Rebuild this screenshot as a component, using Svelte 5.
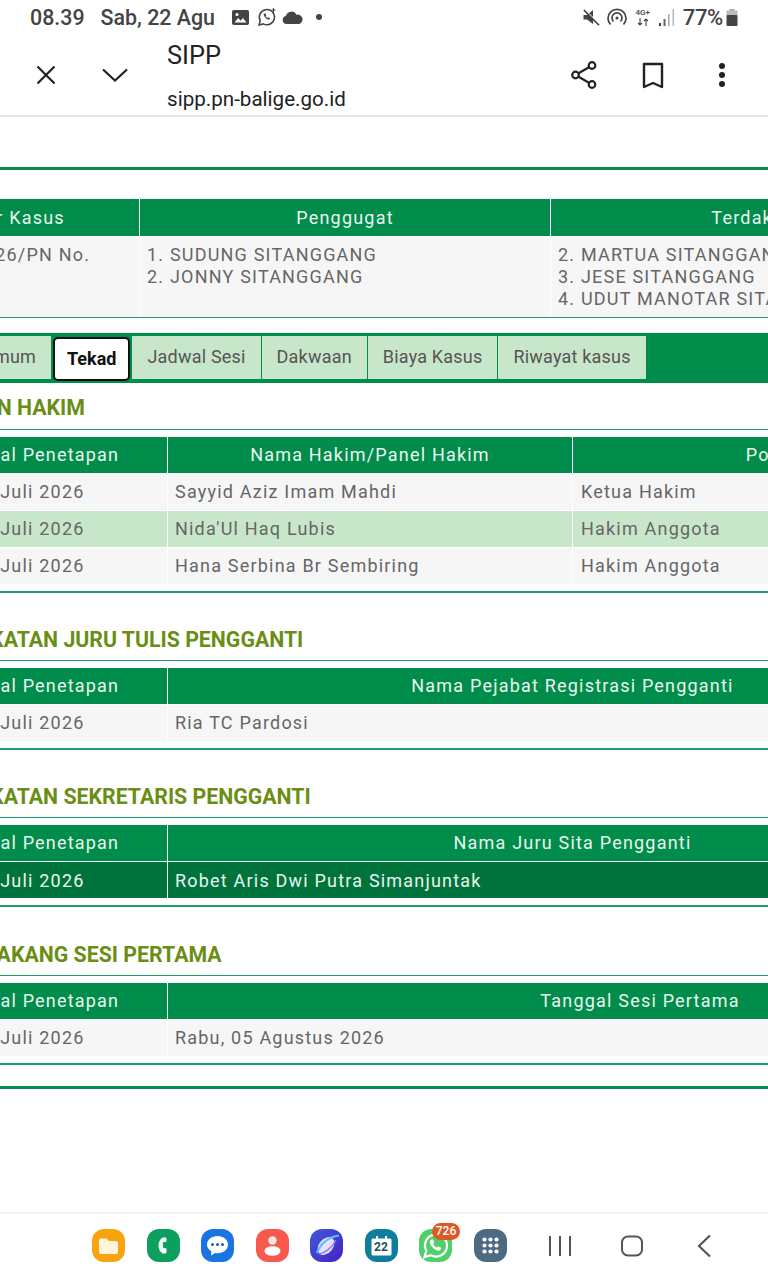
<script>
	const tabs = ['Umum', 'Tekad', 'Jadwal Sesi', 'Dakwaan', 'Biaya Kasus', 'Riwayat kasus'];

	const sections = [
		{
			title: 'PENETAPAN HAKIM',
			cls: 'hakim',
			head: ['Tanggal Penetapan', 'Nama Hakim/Panel Hakim', 'Posisi Hakim'],
			rows: [
				{ cells: ['Senin, 20 Juli 2026', 'Sayyid Aziz Imam Mahdi', 'Ketua Hakim'] },
				{ cells: ['Senin, 20 Juli 2026', "Nida'Ul Haq Lubis", 'Hakim Anggota'], tone: 'light' },
				{ cells: ['Senin, 20 Juli 2026', 'Hana Serbina Br Sembiring', 'Hakim Anggota'] }
			]
		},
		{
			title: 'PENGANGKATAN JURU TULIS PENGGANTI',
			cls: 'pejabat',
			head: ['Tanggal Penetapan', 'Nama Pejabat Registrasi Pengganti'],
			rows: [{ cells: ['Senin, 20 Juli 2026', 'Ria TC Pardosi'] }]
		},
		{
			title: 'PENGANGKATAN SEKRETARIS PENGGANTI',
			cls: 'pejabat',
			head: ['Tanggal Penetapan', 'Nama Juru Sita Pengganti'],
			rows: [{ cells: ['Senin, 20 Juli 2026', 'Robet Aris Dwi Putra Simanjuntak'], tone: 'dark' }]
		},
		{
			title: 'PIHAK BELAKANG SESI PERTAMA',
			cls: 'sesi',
			head: ['Tanggal Penetapan', 'Tanggal Sesi Pertama'],
			rows: [{ cells: ['Senin, 20 Juli 2026', 'Rabu, 05 Agustus 2026'] }]
		}
	];
</script>

<div class="screen">
	<header class="status">
		<div class="status-left">
			<span class="time">08.39</span>
			<span class="date">Sab, 22 Agu</span>
			<svg class="gallery" width="17" height="15" viewBox="0 0 17 15">
				<rect width="17" height="15" rx="2" fill="#444" />
				<path d="M2.5 12.5l3.6-4.6 2.6 2.8 2.2-2.6 3.6 4.4z" fill="#fff" />
				<circle cx="5" cy="4.4" r="1.5" fill="#fff" />
			</svg>
			<svg class="wa" width="20" height="20" viewBox="0 0 20 20" fill="none" stroke="#444" stroke-width="1.5">
				<path d="M2 18l1.2-4.2A7.6 7.6 0 1 1 6.300 16.900z" />
				<path d="M6.500 7c.6 3 2.500 4.900 5.500 5.700l1.200-1.500-2-1-.8.7c-.8-.4-1.400-1-1.800-1.800l.7-.8-1-2z" fill="#444" stroke="none" />
				<path d="M16.500 1v4M14.500 3h4" stroke-width="1.100" />
			</svg>
			<svg class="cloud" width="21" height="13" viewBox="0 0 21 13"><path d="M4.500 13a4 4 0 0 1-.6-7.900 5.600 5.600 0 0 1 10.500-1.400 4.800 4.800 0 0 1 2.600 9.300z" fill="#444" /></svg>
			<span class="dot"></span>
		</div>
		<div class="status-right">
			<svg class="mute" width="17" height="17" viewBox="0 0 17 17">
				<path d="M0.500 6h3.500l6-5v14l-6-4.500H0.500z" fill="#444" />
				<path d="M1 1l15 15" stroke="#444" stroke-width="1.800" />
				<path d="M2.500 1l14 14" stroke="#fff" stroke-width="1" />
			</svg>
			<svg class="hotspot" width="20" height="18" viewBox="0 0 20 18" fill="none" stroke="#444" stroke-width="1.700">
				<path d="M3.500 16.500a9 9 0 1 1 13 0" />
				<path d="M6.500 13.500a5 5 0 1 1 7 0" />
				<circle cx="10" cy="10" r="1.500" fill="#444" stroke="none" />
			</svg>
			<span class="net">
				<span class="net-type">4G+</span>
				<svg width="12" height="8" viewBox="0 0 12 8" fill="none" stroke="#444" stroke-width="1.100">
					<path d="M3 0v7M1 5l2 2 2-2M9 8V1M7 3l2-2 2 2" />
				</svg>
			</span>
			<svg class="signal" width="16" height="17" viewBox="0 0 16 17">
				<rect x="0" y="14" width="2" height="3" fill="#444" />
				<rect x="4.500" y="10" width="2" height="7" fill="#666" />
				<rect x="9" y="5" width="1.600" height="12" fill="#aaa" />
				<rect x="13.500" y="0" width="1.600" height="17" fill="#bbb" />
			</svg>
			<span class="pct">77%</span>
			<svg class="battery" width="12" height="17" viewBox="0 0 12 17">
				<rect x="3.500" y="0" width="5" height="2" fill="#aaa" />
				<rect x="0.500" y="1.500" width="11" height="5" fill="#bbb" />
				<rect x="0.500" y="6" width="11" height="11" rx="1" fill="#444" />
			</svg>
		</div>
	</header>

	<nav class="toolbar">
		<div class="tb-btn">
			<svg width="24" height="24" viewBox="0 0 24 24" fill="none" stroke="#222" stroke-width="2.200"><path d="M3.500 3.500l17 17M20.500 3.500l-17 17" /></svg>
		</div>
		<div class="tb-btn">
			<svg width="28" height="16" viewBox="0 0 28 16" fill="none" stroke="#222" stroke-width="2.200"><path d="M2 2.500l12 11 12-11" /></svg>
		</div>
		<div class="title">
			<span class="site">SIPP</span>
			<span class="url">sipp.pn-balige.go.id</span>
		</div>
		<div class="tb-right">
			<div class="tb-btn">
				<svg width="28" height="30" viewBox="0 0 28 30" fill="none" stroke="#222" stroke-width="2.200">
					<circle cx="22" cy="5.500" r="3.300" />
					<circle cx="5.500" cy="15" r="3.300" />
					<circle cx="22" cy="24.500" r="3.300" />
					<path d="M8.500 13.300L19 7.300M8.500 16.700L19 22.700" />
				</svg>
			</div>
			<div class="tb-btn">
				<svg width="22" height="27" viewBox="0 0 22 27" fill="none" stroke="#222" stroke-width="2.400"><path d="M2 2h18v23l-9-4-9 4z" stroke-linejoin="round" /></svg>
			</div>
			<div class="tb-btn">
				<svg width="8" height="26" viewBox="0 0 8 26" fill="#222"><circle cx="4" cy="4" r="3" /><circle cx="4" cy="13" r="3" /><circle cx="4" cy="22" r="3" /></svg>
			</div>
		</div>
	</nav>

	<main class="content">
		<div class="sheet">
			<hr class="thick" />

			<div class="table case">
				<div class="th">Nomor Kasus</div>
				<div class="th">Penggugat</div>
				<div class="th">Terdakwa</div>
				<div class="td">2/Pid.Sus/2026/PN No.</div>
				<div class="td">1. SUDUNG SITANGGANG<br />2. JONNY SITANGGANG</div>
				<div class="td">2. MARTUA SITANGGANG<br />3. JESE SITANGGANG<br />4. UDUT MANOTAR SITANGGANG</div>
			</div>
			<hr class="thin" />

			<div class="tabs">
				{#each tabs as tab}
					<span class="tab" class:active={tab === 'Tekad'} class:first={tab === 'Umum'}>{tab}</span>
				{/each}
			</div>

			{#each sections as section}
				<section class="block">
					<h3>{section.title}</h3>
					<hr class="thin head-line" />
					<div class="table {section.cls}">
						{#each section.head as h}
							<div class="th">{h}</div>
						{/each}
						{#each section.rows as row}
							{#each row.cells as cell, i}
								<div class="td {row.tone ?? ''}" class:date={i === 0}>{cell}</div>
							{/each}
						{/each}
					</div>
					<hr class="thin foot-line" />
				</section>
			{/each}

			<hr class="thick last" />
		</div>
	</main>

	<footer class="dock">
		<div class="apps">
			<span class="app folder">
				<svg width="33" height="33" viewBox="0 0 33 33"><path d="M7 11.500a2 2 0 0 1 2-2h5.500l2.500 2.500h7a2 2 0 0 1 2 2v9a2 2 0 0 1-2 2H9a2 2 0 0 1-2-2z" fill="#fff4dc" /></svg>
			</span>
			<span class="app phone">
				<svg width="33" height="33" viewBox="0 0 33 33"><path d="M18 8.500h-2.500c-3 2-4 5-4 8s1 6 4 8H18c1 0 1.500-.6 1.500-1.500v-2.500c0-1-.6-1.500-1.500-1.500h-1.500c-.8-1.500-1-5.500 0-6H18c1 0 1.500-.6 1.500-1.500V10c0-1-.6-1.500-1.500-1.500z" fill="#f2fbf6" /></svg>
			</span>
			<span class="app msg">
				<svg width="33" height="33" viewBox="0 0 33 33">
					<path d="M16.500 7c6 0 10.500 3.700 10.500 8.600s-4.500 8.600-10.500 8.600c-.8 0-1.500 0-2.200-.2L10 26.500l.4-4.300C7.500 20.600 6 18.300 6 15.600 6 10.700 10.500 7 16.500 7z" fill="#fff" />
					<circle cx="11.500" cy="15.500" r="1.500" fill="#1c5fb0" /><circle cx="16.500" cy="15.500" r="1.500" fill="#1c5fb0" /><circle cx="21.500" cy="15.500" r="1.500" fill="#1c5fb0" />
				</svg>
			</span>
			<span class="app contact">
				<svg width="33" height="33" viewBox="0 0 33 33"><circle cx="16.500" cy="11.500" r="4.200" fill="#fde7e2" /><ellipse cx="16.500" cy="22" rx="8" ry="4.800" fill="#fff" /></svg>
			</span>
			<span class="app browser">
				<svg width="33" height="33" viewBox="0 0 33 33" fill="none">
					<ellipse cx="16" cy="17" rx="7" ry="10" transform="rotate(40 16 17)" fill="#e6e0ff" />
					<path d="M7 24C11 14 19 8 29 6.500" stroke="#5cc0f2" stroke-width="2.200" />
					<path d="M9 25c6-1 13-6 17-14" stroke="#8f7bf0" stroke-width="1.500" />
				</svg>
			</span>
			<span class="app calendar">
				<svg width="33" height="33" viewBox="0 0 33 33"><path d="M8 9.500h17a1.500 1.500 0 0 1 1.500 1.500v14a1.500 1.500 0 0 1-1.500 1.500H8A1.500 1.500 0 0 1 6.500 25V11A1.500 1.500 0 0 1 8 9.500z" fill="#fff" /><rect x="11" y="7" width="2" height="4" fill="#fff" /><rect x="20" y="7" width="2" height="4" fill="#fff" /></svg>
				<span class="cal-day">22</span>
			</span>
			<span class="app whatsapp">
				<svg width="33" height="33" viewBox="0 0 33 33">
					<path d="M5.500 28l1.800-6.300a11 11 0 1 1 4.300 4.400z" fill="none" stroke="#fff" stroke-width="2.200" />
					<path d="M12 10.500c-2 2-1 5 1.500 7.800s5.600 4.200 7.700 2.800c1-.7 1.200-1.600 1-2.400l-3-1.500-1.300 1.300c-1.500-.5-3-2-3.800-3.700l1.200-1.300-1.300-3.100c-.8-.2-1.400 0-2 .6z" fill="#fff" />
				</svg>
				<span class="badge">726</span>
			</span>
			<span class="app grid">
				<svg width="33" height="33" viewBox="0 0 33 33" fill="#fff">
					{#each [10.500, 16.500, 22.500] as y}
						{#each [10.500, 16.500, 22.500] as x}
							<circle cx={x} cy={y} r="2.100" />
						{/each}
					{/each}
				</svg>
			</span>
		</div>
		<div class="softkeys">
			<svg width="24" height="20" viewBox="0 0 24 20" fill="#555"><rect x="1" y="0" width="2" height="20" /><rect x="11" y="0" width="2" height="20" /><rect x="21" y="0" width="2" height="20" /></svg>
			<svg width="24" height="22" viewBox="0 0 24 22" fill="none" stroke="#555" stroke-width="2"><rect x="2" y="1.500" width="20" height="19" rx="6" /></svg>
			<svg width="16" height="24" viewBox="0 0 16 24" fill="none" stroke="#555" stroke-width="2.200"><path d="M14 1.500L3 12l11 10.500" /></svg>
		</div>
	</footer>
</div>

<style>
	:global(body) {
		background: #fff;
	}

	.screen {
		width: 768px;
		height: 1280px;
		display: flex;
		flex-direction: column;
		overflow: hidden;
		background: #fff;
		font-family: Roboto, 'Liberation Sans', sans-serif;
	}

	/* status bar */
	.status {
		height: 34px;
		display: flex;
		align-items: center;
		justify-content: space-between;
		padding: 0 30px;
		color: #444;
		font-weight: 500;
		font-size: 21.400px;
	}

	.status-left,
	.status-right {
		display: flex;
		align-items: center;
	}

	.date {
		margin-left: 16px;
	}

	.gallery {
		margin-left: 17px;
	}

	.wa {
		margin-left: 8px;
	}

	.cloud {
		margin-left: 5px;
	}

	.dot {
		width: 6px;
		height: 6px;
		border-radius: 50%;
		background: #444;
		margin-left: 13px;
	}

	.hotspot {
		margin-left: 7px;
	}

	.net {
		display: flex;
		flex-direction: column;
		align-items: center;
		width: 18px;
		margin-left: 7px;
		line-height: 1;
	}

	.net-type {
		font-size: 8px;
		height: 9px;
	}

	.signal {
		margin-left: 7px;
	}

	.pct {
		margin-left: 8px;
		font-size: 22px;
		letter-spacing: -0.3px;
	}

	.battery {
		margin-left: 3px;
	}

	/* browser toolbar */
	.toolbar {
		position: relative;
		height: 83px;
		flex: none;
		display: flex;
		align-items: center;
		padding: 1px 0 0 11px;
		border-bottom: 2px solid #e8e8e8;
		box-sizing: border-box;
		color: #222;
	}

	.tb-btn {
		width: 69px;
		height: 40px;
		display: flex;
		align-items: center;
		justify-content: center;
	}

	.title {
		display: flex;
		flex-direction: column;
		align-self: flex-start;
		margin-left: 18px;
		padding-top: 5px;
	}

	.site {
		font-size: 25.400px;
		line-height: 30px;
	}

	.url {
		font-size: 20.600px;
		line-height: 24px;
		margin-top: 17px;
	}

	.tb-right {
		display: flex;
		margin-left: auto;
		margin-right: 12px;
	}

	/* page content, scrolled sideways so the left part is cut off */
	.content {
		flex: 1;
		overflow: hidden;
	}

	.sheet {
		width: 1260px;
		margin-left: -132px;
		padding-top: 50px;
	}

	hr {
		margin: 0;
		border: 0;
	}

	.thick {
		height: 3px;
		background: #0a8a4e;
	}

	.thin {
		height: 1px;
		background: #1f9e66;
	}

	.last {
		margin-top: 21px;
	}

	.table {
		display: grid;
		column-gap: 1px;
		margin-left: 29px;
		letter-spacing: 1.200px;
		font-size: 18px;
	}

	.table.case {
		margin-left: 0;
		margin-top: 29px;
		grid-template-columns: 271px 410px 408px;
	}

	.hakim {
		grid-template-columns: 270px 404px 465px;
	}

	.pejabat {
		grid-template-columns: 270px 809px;
	}

	.sesi {
		grid-template-columns: 270px 944px;
	}

	.th {
		background: #008c4a;
		color: #eaf6ef;
		text-align: center;
		height: 36px;
		line-height: 36px;
		margin-bottom: 1px;
	}

	.case .th {
		height: 37px;
		line-height: 37px;
	}

	.td {
		background: #f6f6f6;
		color: #666;
		height: 36px;
		line-height: 35px;
		padding-left: 7px;
		margin-bottom: 1px;
		white-space: nowrap;
		overflow: hidden;
	}

	.td.date {
		padding-left: 0;
		text-indent: -2px;
	}

	.hakim .td:nth-child(3n) {
		padding-left: 8px;
	}

	.td.light {
		background: #c8e6c9;
	}

	.td.dark {
		background: #00733c;
		color: #e8f5ee;
		line-height: 37px;
	}

	.case .td {
		height: 80px;
		line-height: 22px;
		padding: 7px 0 0 7px;
		box-sizing: border-box;
		margin-bottom: 0;
	}

	/* tabs */
	.tabs {
		margin-top: 15px;
		height: 50px;
		box-sizing: border-box;
		background: #008c4a;
		padding: 3px 0 3px 4px;
		display: flex;
		font-size: 18px;
		letter-spacing: 0.200px;
		column-gap: 1px;
	}

	.tab {
		height: 43px;
		line-height: 42px;
		padding: 0 15px;
		background: #c8e6c9;
		color: #555;
	}

	.tab.first {
		width: 179px;
		padding: 0 15px 0 0;
		box-sizing: border-box;
		text-align: right;
	}

	.tab.active {
		position: relative;
		height: 44px;
		line-height: 39px;
		margin: 1px 1px -2px 1px;
		padding: 0 12px;
		box-sizing: border-box;
		background: #fff;
		border: 2px solid #111;
		border-radius: 5px;
		color: #111;
		font-weight: 700;
		letter-spacing: 0;
	}

	/* section blocks */
	.block h3 {
		margin: 0;
		padding-left: 23px;
		height: 46px;
		line-height: 50px;
		font-size: 21.300px;
		font-weight: 700;
		color: #6a8e14;
		white-space: nowrap;
		text-align: left;
	}

	.head-line {
		margin-bottom: 7px;
	}

	.foot-line {
		margin-top: 6px;
		height: 2px;
	}

	.block + .block h3 {
		margin-top: 21px;
		line-height: 52px;
	}

	.block:last-of-type h3 {
		margin-top: 22px;
	}

	/* bottom dock */
	.dock {
		height: 68px;
		flex: none;
		border-top: 2px solid #f4f4f4;
		display: flex;
		align-items: center;
		box-sizing: border-box;
		padding: 0 0 3px 92px;
	}

	.apps {
		display: flex;
		column-gap: 21.500px;
	}

	.app {
		position: relative;
		width: 33px;
		height: 33px;
		border-radius: 12px;
		display: block;
	}

	.app svg {
		display: block;
	}

	.folder {
		background: #f7a40e;
	}

	.phone {
		background: #0ba060;
	}

	.msg {
		background: #1c74e2;
	}

	.contact {
		background: #f8594e;
	}

	.browser {
		background: linear-gradient(135deg, #3c5ae0, #4a20c0);
	}

	.calendar {
		background: #0d7f9c;
	}

	.cal-day {
		position: absolute;
		left: 0;
		right: 0;
		top: 11px;
		text-align: center;
		font-size: 12px;
		font-weight: 700;
		line-height: 14px;
		color: #1c4f60;
	}

	.whatsapp {
		background: #4fd06a;
	}

	.badge {
		position: absolute;
		top: -6px;
		left: 13px;
		width: 28px;
		height: 17px;
		border-radius: 9px;
		background: #dc5a24;
		color: #fff;
		font-size: 12px;
		font-weight: 500;
		line-height: 17px;
		text-align: center;
	}

	.grid {
		background: #4c6a82;
	}

	.softkeys {
		display: flex;
		align-items: center;
		column-gap: 48px;
		margin-left: 41px;
	}

	.softkeys svg:last-child {
		margin-left: 4px;
	}
</style>
